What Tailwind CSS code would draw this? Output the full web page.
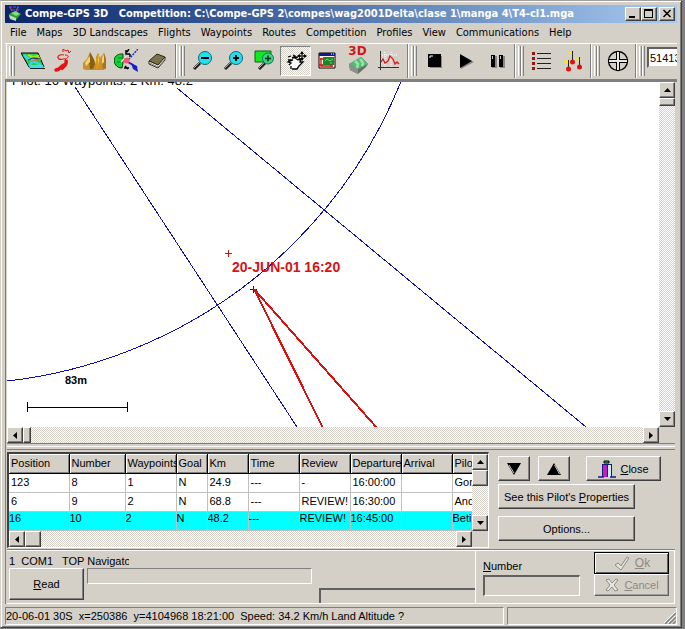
<!DOCTYPE html>
<html lang="en">
<head>
    <meta charset="UTF-8">
    <meta name="viewport" content="width=device-width, initial-scale=1.0">
    <title>Compe-GPS 3D</title>
    <script src="https://cdn.jsdelivr.net/npm/@tailwindcss/browser@4"></script>
</head>
<body class="bg-[#808080] text-black text-[11px] leading-[14px] font-['Liberation_Sans',sans-serif]">
<div class="h-screen pr-[3px] pb-px">
<div class="h-full flex flex-col bg-[#d4d0c8] border border-t-[#a0a0a0] border-l-[#d4d0c8] border-r-[#404040] border-b-[#404040] shadow-[inset_1px_1px_#fff,inset_-1px_-1px_#808080] p-1 pb-[2px] overflow-hidden">

    <!-- Title bar -->
    <header class="h-[18px] shrink-0 flex items-center bg-linear-to-r from-[#0a246a] to-[#a6caf0] pl-[2px] pr-[2px]">
        <svg class="w-4 h-4 shrink-0" viewBox="0 0 16 16">
            <path d="M2 1h10M5 4h8" stroke="#55f" stroke-dasharray="3 1"/>
            <path d="M3 1l2 4M11 1l-2 4" stroke="#e44" />
            <path d="M2 8l6-3 6 3-5 6-6-2z" fill="#2da02d"/>
            <path d="M4 7l5-2 4 3-4 2z" fill="#7be07b"/>
            <path d="M2 9l7 3v3l-6-2z" fill="#c8d8c8"/>
        </svg>
        <h1 class="flex-1 pl-[2px] text-white font-bold text-[11px] whitespace-pre font-['DejaVu_Sans_Condensed','DejaVu_Sans',sans-serif]">Compe-GPS 3D   Competition: C:\Compe-GPS 2\compes\wag2001Delta\clase 1\manga 4\T4-cl1.mga</h1>
        <div class="flex">
            <button aria-label="Minimize" class="w-4 h-[14px] bg-[#d4d0c8] border border-t-white border-l-white border-r-[#404040] border-b-[#404040] shadow-[inset_-1px_-1px_#808080]">
                <svg class="w-[14px] h-3" viewBox="0 0 14 12"><path d="M3 8h6v2H3z"/></svg>
            </button>
            <button aria-label="Maximize" class="w-4 h-[14px] bg-[#d4d0c8] border border-t-white border-l-white border-r-[#404040] border-b-[#404040] shadow-[inset_-1px_-1px_#808080]">
                <svg class="w-[14px] h-3" viewBox="0 0 14 12"><path d="M2 1h9v9H2zM3 3v6h7V3z" fill-rule="evenodd"/></svg>
            </button>
            <button aria-label="Close window" class="ml-[2px] w-4 h-[14px] bg-[#d4d0c8] border border-t-white border-l-white border-r-[#404040] border-b-[#404040] shadow-[inset_-1px_-1px_#808080]">
                <svg class="w-[14px] h-3" viewBox="0 0 14 12"><path d="M3.500 2l7 7M10.500 2l-7 7" stroke="#000" stroke-width="1.500"/></svg>
            </button>
        </div>
    </header>

    <!-- Menu -->
    <nav class="h-5 shrink-0 flex items-center gap-[10px] pl-[5px] whitespace-nowrap font-['DejaVu_Sans_Condensed','DejaVu_Sans',sans-serif]">
        <button>File</button>
        <button>Maps</button>
        <button>3D Landscapes</button>
        <button>Flights</button>
        <button>Waypoints</button>
        <button>Routes</button>
        <button>Competition</button>
        <button>Profiles</button>
        <button>View</button>
        <button>Communications</button>
        <button>Help</button>
    </nav>

    <!-- Toolbar -->
    <div class="h-[35px] shrink-0 flex pl-px overflow-hidden border-t border-white">
        <div class="shrink-0 flex items-center pl-[2px] pr-[3px] border-l border-l-white border-r border-r-[#808080]">
            <div class="w-[6px] h-[30px] mr-[2px] flex justify-between"><i class="w-[3px] border-l border-white border-r border-r-[#808080]"></i><i class="w-[3px] border-l border-white border-r border-r-[#808080]"></i></div>
            <button aria-label="Map" class="w-[31px] h-[30px] grid place-items-center">
                <svg class="w-6 h-6" viewBox="0 0 24 24">
                    <path d="M0 4h17l6 14H8z" fill="#30c850" stroke="#000"/>
                    <path d="M3 6l4 4 3-1 4 4M8 17l4-5 8 4" fill="none" stroke="#30d8f0" stroke-width="2.500"/>
                    <path d="M7 6l5 2 5-1 2 4" fill="none" stroke="#a0e820" stroke-width="2"/>
                    <path d="M7 11l5-2 7 1" fill="none" stroke="#202840"/>
                    <path d="M11 12l4-1 4 2" fill="none" stroke="#d07030"/>
                    <path d="M8 16h14l1 3H9z" fill="#40e0e0"/>
                    <path d="M9 19.500h15" stroke="#202020"/>
                </svg>
            </button>
            <button aria-label="Track" class="w-[31px] h-[30px] grid place-items-center">
                <svg class="w-6 h-6" viewBox="0 0 24 24" fill="none" stroke="#e81010">
                    <path d="M11 3V0l3 2 2-1 1 3 2-2" stroke-width="1"/>
                    <path d="M12 6c-5-1-8 2-5 4s8-3 6 2" stroke-width="1.200"/>
                    <path d="M13 6c5 0 3 3 1 4" stroke-width="1"/>
                    <path d="M14 11c1 4-1 6-5 9" stroke-width="3.500"/>
                    <path d="M12 16c-3 1-3 4-8 5" stroke-width="3.500" stroke-linecap="round"/>
                </svg>
            </button>
            <button aria-label="3D terrain" class="w-[31px] h-[30px] grid place-items-center">
                <svg class="w-6 h-6" viewBox="0 0 24 24">
                    <path d="M0 20v-6l4-4 3-7 4 7 2 5V8l2-4 2 5 4-5 2 6v10l-3 1H3z" fill="#c89030"/>
                    <path d="M7 3l4 8 1 4-2 5H7l-1-7z" fill="#846018"/>
                    <path d="M15 4l2 6-1 9-3 1V9z" fill="#d8981c"/>
                    <path d="M21 4l2 6v9l-3 1-1-8z" fill="#a87420"/>
                    <path d="M2 14l5-7v6l-4 4zM15 6l1 6-1 3zM19 9l2-4v8l-2 2z" fill="#f8d470"/>
                </svg>
            </button>
            <button aria-label="Waypoint globe" class="w-[31px] h-[30px] grid place-items-center">
                <svg class="w-6 h-6" viewBox="0 0 24 24">
                    <path d="M9 5C-3 4-2 19 8 19l1-5z" fill="#10d830" stroke="#004010"/>
                    <path d="M3 13h4M4 9h4" stroke="#088020"/>
                    <path d="M12 1v4h4M15 0l-2 3M16 5v3M10 19h5M11 17l3 3" stroke="#000" stroke-width="1.500" fill="none"/>
                    <path d="M24 0l-9 10" stroke="#2030c0" stroke-dasharray="2 1" stroke-width="1.500"/>
                    <path d="M17 14l6 3 1 6-5-3z" fill="#1020d0"/>
                    <path d="M14 13l5 3" stroke="#1020d0" stroke-width="2"/>
                    <path d="M7 13l5-5" stroke="#fff" stroke-width="1.500"/>
                    <circle cx="12.500" cy="11.500" r="3" fill="#f05878"/>
                </svg>
            </button>
            <button aria-label="Logbook" class="w-[31px] h-[30px] grid place-items-center">
                <svg class="w-6 h-6" viewBox="0 0 24 24">
                    <path d="M4 12l8-7 8 3-7 8z" fill="#7a7248" stroke="#2a2618"/>
                    <path d="M4 12l9 4 7-8v3l-7 8-9-4z" fill="#f4f4ec" stroke="#2a2618"/>
                    <path d="M5 14l8 4 7-8" fill="none" stroke="#888"/>
                </svg>
            </button>
        </div>

        <div class="shrink-0 flex items-center pl-[2px] pr-[3px] border-l border-l-white border-r border-r-[#808080]">
            <div class="w-[6px] h-[30px] mr-[2px] flex justify-between"><i class="w-[3px] border-l border-white border-r border-r-[#808080]"></i><i class="w-[3px] border-l border-white border-r border-r-[#808080]"></i></div>
            <button aria-label="Zoom out" class="w-[31px] h-[30px] grid place-items-center">
                <svg class="w-6 h-6" viewBox="0 0 24 24">
                    <path d="M9 14l-6 6" stroke="#202020" stroke-width="3"/><path d="M9 13l-6 6" stroke="#a0a0a0"/>
                    <circle cx="14" cy="9" r="6.500" fill="#20e0f0" stroke="#106878"/>
                    <path d="M10 9h8" stroke="#000" stroke-width="2"/>
                </svg>
            </button>
            <button aria-label="Zoom in" class="w-[31px] h-[30px] grid place-items-center">
                <svg class="w-6 h-6" viewBox="0 0 24 24">
                    <path d="M9 14l-6 6" stroke="#202020" stroke-width="3"/><path d="M9 13l-6 6" stroke="#a0a0a0"/>
                    <circle cx="14" cy="9" r="6.500" fill="#20e0f0" stroke="#106878"/>
                    <path d="M11 9h6M14 6v6" stroke="#000" stroke-width="2"/>
                </svg>
            </button>
            <button aria-label="Zoom window" class="w-[31px] h-[30px] grid place-items-center">
                <svg class="w-6 h-6" viewBox="0 0 24 24">
                    <path d="M2 2h16v11H2z" fill="#10e820" stroke="#106010"/>
                    <path d="M12 14l-6 6" stroke="#202020" stroke-width="3"/><path d="M12 13l-6 6" stroke="#a0a0a0"/>
                    <circle cx="15" cy="9.500" r="5.500" fill="#40d080" stroke="#107878"/>
                    <path d="M12 9.500h6M15 6.500v6" stroke="#003010" stroke-width="1.500"/>
                </svg>
            </button>
            <button aria-label="Pan" aria-pressed="true" class="w-[31px] h-[30px] grid place-items-center border border-t-[#808080] border-l-[#808080] border-white bg-[repeating-conic-gradient(#fff_0_25%,#d4d0c8_0_50%)] bg-[length:2px_2px]">
                <svg class="w-6 h-6" viewBox="0 0 24 24">
                    <path d="M6 19l-1-4 2-2-1-3 3-3 4 3 3-3 2 2-3 3h5l-3 3-3 4-4 1z" fill="#fff"/>
                    <path d="M4 8l3-1M9 6l2 1-3 2 6-1M4 11l5 0-5 2 3 1-2 2M7 17v3M11 9l3 2 2-2M15 11l2-1-1 3h3l-4 4-2 3H8" fill="none" stroke="#000" stroke-width="1.300"/>
                    <path d="M14 7h8M18 3v8" stroke="#000" stroke-width="1.300"/>
                    <path d="M16 5l2-3 2 3zM16 9l2 3 2-3zM16 5l-3 2 3 2zM20 5l3 2-3 2z"/>
                    <path d="M17.500 6.500h1v1h-1z" fill="#fff"/>
                </svg>
            </button>
            <button aria-label="Map window" class="w-[31px] h-[30px] grid place-items-center">
                <svg class="w-6 h-6" viewBox="0 0 24 24">
                    <path d="M4 4h16v15H4z" fill="#fff0e0" stroke="#000"/>
                    <path d="M4 4h16v3H4z" fill="#101890"/>
                    <path d="M8 8h11v8H8z" fill="#18882a"/><path d="M10 12l2-2 3 2 3-2M15 14h2" fill="none" stroke="#60e060"/>
                    <path d="M5 10h3M6 9v8h12M16 15v3M4 16h4" fill="none" stroke="#d01818" stroke-width="1.300"/>
                    <path d="M18 5h1M16 5h1" stroke="#fff"/>
                </svg>
            </button>
            <button aria-label="3D view" class="w-[31px] h-[30px] flex flex-col items-center justify-start pt-px">
                <span class="font-bold text-[12px] leading-[9px] text-[#d01818] font-['DejaVu_Sans',sans-serif]">3D</span>
                <svg class="w-6 h-[18px]" viewBox="0 0 24 18">
                    <path d="M3 8L15 1l7 7-2 3-8 7-8-4z" fill="#687068"/>
                    <path d="M3 8L15 1l7 7-10 5z" fill="#58b878"/>
                    <path d="M9 5l3 3-1 4M14 3l3 4-1 3" fill="none" stroke="#90e8a8" stroke-width="2.500"/>
                    <path d="M3 8l9 5v5l-8-4z" fill="#8c908c"/>
                </svg>
            </button>
            <button aria-label="Altitude graph" class="w-[31px] h-[30px] grid place-items-center">
                <svg class="w-6 h-6" viewBox="0 0 24 24" fill="none">
                    <path d="M3 6h18M8 3v16M14 3v16" stroke="#fff" stroke-dasharray="1 1"/>
                    <path d="M3.500 2v19M1 18.500h21" stroke="#303030"/>
                    <path d="M4 13l2-3 2 4 3-2 2-5 3 3 2 5 2-2 2 2" stroke="#d81818" stroke-width="1.300"/>
                </svg>
            </button>
        </div>

        <div class="shrink-0 flex items-center pl-[2px] pr-[2px] border-l border-l-white border-r border-r-[#808080]">
            <div class="w-[6px] h-[30px] mr-[2px] flex justify-between"><i class="w-[3px] border-l border-white border-r border-r-[#808080]"></i><i class="w-[3px] border-l border-white border-r border-r-[#808080]"></i></div>
            <button aria-label="Stop" class="w-[31px] h-[30px] grid place-items-center">
                <svg class="w-6 h-6" viewBox="0 0 24 24"><path d="M7 7h12v12H7z" fill="#888"/><path d="M5 5h13v13H5z"/><path d="M7 9V7h3" fill="none" stroke="#fff"/></svg>
            </button>
            <button aria-label="Play" class="w-[31px] h-[30px] grid place-items-center">
                <svg class="w-6 h-6" viewBox="0 0 24 24"><path d="M7 7l13 6-13 7z" fill="#888"/><path d="M6 5l12 7-12 7z"/></svg>
            </button>
            <button aria-label="Pause" class="w-[31px] h-[30px] grid place-items-center">
                <svg class="w-6 h-6" viewBox="0 0 24 24"><path d="M7 7h5v12H7zM15 7h5v12h-5z" fill="#888"/><path d="M6 6h4v12H6zM14 6h4v12h-4z"/><path d="M7.500 10V7M15.500 10V7" stroke="#ccc"/></svg>
            </button>
        </div>

        <div class="shrink-0 flex items-center pl-[2px] pr-[2px] border-l border-l-white border-r border-r-[#808080]">
            <div class="w-[6px] h-[30px] mr-[2px] flex justify-between"><i class="w-[3px] border-l border-white border-r border-r-[#808080]"></i><i class="w-[3px] border-l border-white border-r border-r-[#808080]"></i></div>
            <button aria-label="List" class="w-[31px] h-[30px] grid place-items-center">
                <svg class="w-6 h-6" viewBox="0 0 24 24">
                    <path d="M2 3h3v3H2zM2 8h3v3H2zM2 13h3v3H2zM2 18h3v3H2z" fill="#901818"/>
                    <path d="M7 4.500h14M7 9.500h14M7 14.500h14M7 19.500h14" stroke="#202020"/>
                </svg>
            </button>
            <button aria-label="Task flags" class="w-[31px] h-[30px] grid place-items-center">
                <svg class="w-6 h-6" viewBox="0 0 24 24">
                    <path d="M7.500 11v9M11.500 2v11M18.500 8v10" stroke="#202020"/>
                    <path d="M7 10l-5 3 5 2zM11 2L7 4l4 2zM18 8l-4 2 4 2z" fill="#f0f010" />
                    <circle cx="7.500" cy="20" r="2.500" fill="#e01010"/><circle cx="11.500" cy="13" r="2.500" fill="#e01010"/><circle cx="18.500" cy="18" r="2.500" fill="#e01010"/>
                </svg>
            </button>
        </div>

        <div class="shrink-0 flex items-center pl-[2px] pr-[2px] border-l border-l-white border-r border-r-[#808080]">
            <div class="w-[6px] h-[30px] mr-[2px] flex justify-between"><i class="w-[3px] border-l border-white border-r border-r-[#808080]"></i><i class="w-[3px] border-l border-white border-r border-r-[#808080]"></i></div>
            <button aria-label="Center" class="w-[31px] h-[30px] grid place-items-center">
                <svg class="w-6 h-6" viewBox="0 0 24 24" fill="none">
                    <circle cx="12" cy="12" r="9.500" stroke="#000" stroke-width="1.300"/>
                    <path d="M2 12h20M12 2v20" stroke="#000" stroke-width="4"/>
                    <path d="M3 12h18M12 3v18" stroke="#e8e6e0" stroke-width="2"/>
                </svg>
            </button>
        </div>

        <div class="flex-1 flex pl-[2px] border-l border-white overflow-hidden">
            <div class="w-[6px] h-[30px] mt-[2px] mr-[2px] shrink-0 flex justify-between"><i class="w-[3px] border-l border-white border-r border-r-[#808080]"></i><i class="w-[3px] border-l border-white border-r border-r-[#808080]"></i></div>
            <input aria-label="Scale" value="51413" class="shrink-0 w-20 h-[21px] mt-[3px] bg-white border-2 border-t-[#606060] border-l-[#606060] border-[#d4d0c8] pl-px text-[11px]">
        </div>
    </div>

    <div class="h-1 shrink-0 bg-[#808080] border-t border-t-[#d4d0c8]"></div>

    <main class="flex-1 min-h-0 flex flex-col pr-[2px] pl-px border-l border-l-[#808080]">
        <!-- Map -->
        <div class="flex-1 min-h-0 flex">
            <svg class="flex-1 min-w-0 h-full bg-white overflow-hidden" shape-rendering="crispEdges" fill="none">
                <text x="5" y="3" font-size="13" fill="#000">Pilot: 16 Waypoints: 2 Km: 48.2</text>
                <g stroke="#1010a0">
                    <circle cx="-54" cy="-181" r="483"/>
                    <path d="M68 5L290 345M170 6L579 345"/>
                    <path d="M243 207.500h7M246.500 204v7"/>
                </g>
                <path d="M247 207L316 346M247 207L370 346" stroke="#d41414" stroke-width="2"/>
                <path d="M218 171.500h7M221.500 168v7" stroke="#d41414"/>
                <text x="225" y="190" font-size="14" font-weight="bold" fill="#d41414">20-JUN-01 16:20</text>
                <text x="58" y="302" font-size="11" font-weight="bold" fill="#000">83m</text>
                <path d="M20 325.500h101M20.500 320v10M120.500 320v10" stroke="#000"/>
            </svg>
            <div class="w-4 shrink-0 flex flex-col bg-[repeating-conic-gradient(#fff_0_25%,#d4d0c8_0_50%)] bg-[length:2px_2px]">
                <button aria-label="Scroll up" class="h-4 grid place-items-center bg-[#d4d0c8] border border-t-white border-l-white border-r-[#404040] border-b-[#404040] shadow-[inset_-1px_-1px_#808080]"><svg class="w-[7px] h-1" viewBox="0 0 7 4"><path d="M0 4l3.500-4L7 4z"/></svg></button>
                <div class="h-2 bg-[#d4d0c8] border border-t-white border-l-white border-r-[#404040] border-b-[#404040] shadow-[inset_-1px_-1px_#808080]"></div>
                <button aria-label="Scroll down" class="h-4 mt-auto grid place-items-center bg-[#d4d0c8] border border-t-white border-l-white border-r-[#404040] border-b-[#404040] shadow-[inset_-1px_-1px_#808080]"><svg class="w-[7px] h-1" viewBox="0 0 7 4"><path d="M0 0l3.500 4L7 0z"/></svg></button>
            </div>
        </div>
        <div class="h-[17px] shrink-0 flex pr-4 border-b border-b-[#808080]">
            <div class="flex-1 flex bg-[repeating-conic-gradient(#fff_0_25%,#d4d0c8_0_50%)] bg-[length:2px_2px]">
                <button aria-label="Scroll left" class="w-4 grid place-items-center bg-[#d4d0c8] border border-t-white border-l-white border-r-[#404040] border-b-[#404040] shadow-[inset_-1px_-1px_#808080]"><svg class="w-1 h-[7px]" viewBox="0 0 4 7"><path d="M4 0L0 3.500 4 7z"/></svg></button>
                <div class="w-2 bg-[#d4d0c8] border border-t-white border-l-white border-r-[#404040] border-b-[#404040] shadow-[inset_-1px_-1px_#808080]"></div>
                <button aria-label="Scroll right" class="w-4 ml-auto grid place-items-center bg-[#d4d0c8] border border-t-white border-l-white border-r-[#404040] border-b-[#404040] shadow-[inset_-1px_-1px_#808080]"><svg class="w-1 h-[7px]" viewBox="0 0 4 7"><path d="M0 0l4 3.500L0 7z"/></svg></button>
            </div>
        </div>
        <div class="h-2 shrink-0 pt-[2px]"><div class="h-[4px] border-t border-t-white border-b border-b-[#808080]"></div></div>

        <!-- Results -->
        <section class="h-[98px] shrink-0 flex border-b border-b-[#808080]">
            <div class="flex-1 h-24 flex flex-col border-t-2 border-l-2 border-[#404040] border-r border-r-white border-b border-b-white overflow-hidden">
                <div class="flex-1 min-h-0 flex">
                    <div class="flex-1 min-w-0 overflow-hidden bg-white">
                        <table class="table-fixed w-[524px] border-collapse text-left leading-[13px]">
                            <colgroup>
                                <col class="w-[60px]"><col class="w-[56px]"><col class="w-[51px]"><col class="w-[31px]"><col class="w-[41px]"><col class="w-[51px]"><col class="w-[51px]"><col class="w-[51px]"><col class="w-[51px]"><col class="w-[81px]">
                            </colgroup>
                            <thead>
                                <tr class="h-[19px] bg-[#d4d0c8] whitespace-nowrap">
                                    <th class="p-0 pl-[2px] font-normal overflow-hidden border-r border-b border-black shadow-[inset_1px_1px_#fff,inset_-1px_-1px_#808080]">Position</th>
                                    <th class="p-0 pl-[2px] font-normal overflow-hidden border-r border-b border-black shadow-[inset_1px_1px_#fff,inset_-1px_-1px_#808080]">Number</th>
                                    <th class="p-0 pl-[2px] font-normal overflow-hidden border-r border-b border-black shadow-[inset_1px_1px_#fff,inset_-1px_-1px_#808080]">Waypoints</th>
                                    <th class="p-0 pl-[2px] font-normal overflow-hidden border-r border-b border-black shadow-[inset_1px_1px_#fff,inset_-1px_-1px_#808080]">Goal</th>
                                    <th class="p-0 pl-[2px] font-normal overflow-hidden border-r border-b border-black shadow-[inset_1px_1px_#fff,inset_-1px_-1px_#808080]">Km</th>
                                    <th class="p-0 pl-[2px] font-normal overflow-hidden border-r border-b border-black shadow-[inset_1px_1px_#fff,inset_-1px_-1px_#808080]">Time</th>
                                    <th class="p-0 pl-[2px] font-normal overflow-hidden border-r border-b border-black shadow-[inset_1px_1px_#fff,inset_-1px_-1px_#808080]">Review</th>
                                    <th class="p-0 pl-[2px] font-normal overflow-hidden border-r border-b border-black shadow-[inset_1px_1px_#fff,inset_-1px_-1px_#808080]">Departure</th>
                                    <th class="p-0 pl-[2px] font-normal overflow-hidden border-r border-b border-black shadow-[inset_1px_1px_#fff,inset_-1px_-1px_#808080]">Arrival</th>
                                    <th class="p-0 pl-[2px] font-normal overflow-hidden border-r border-b border-black shadow-[inset_1px_1px_#fff,inset_-1px_-1px_#808080]">Pilot</th>
                                </tr>
                            </thead>
                            <tbody class="[&_td]:p-0 [&_td]:border-r [&_td]:border-b [&_td]:border-[#c0c0c0] [&_td]:overflow-hidden [&_td]:whitespace-nowrap">
                                <tr class="h-[19px] [&>td]:pl-[2px]"><td>123</td><td>8</td><td>1</td><td>N</td><td>24.9</td><td>---</td><td>-</td><td>16:00:00</td><td></td><td>Gor</td></tr>
                                <tr class="h-[19px] [&>td]:pl-[2px]"><td>6</td><td>9</td><td>2</td><td>N</td><td>68.8</td><td>---</td><td>REVIEW!</td><td>16:30:00</td><td></td><td>And</td></tr>
                                <tr class="h-[19px] bg-[#00ffff] align-top"><td>16</td><td>10</td><td>2</td><td>N</td><td>48.2</td><td>---</td><td>REVIEW!</td><td>16:45:00</td><td></td><td>Beti</td></tr>
                            </tbody>
                        </table>
                    </div>
                    <div class="w-4 shrink-0 flex flex-col bg-[repeating-conic-gradient(#fff_0_25%,#d4d0c8_0_50%)] bg-[length:2px_2px]">
                        <button aria-label="Table up" class="h-4 grid place-items-center bg-[#d4d0c8] border border-t-white border-l-white border-r-[#404040] border-b-[#404040] shadow-[inset_-1px_-1px_#808080]"><svg class="w-[7px] h-1" viewBox="0 0 7 4"><path d="M0 4l3.500-4L7 4z"/></svg></button>
                        <div class="h-4 bg-[#d4d0c8] border border-t-white border-l-white border-r-[#404040] border-b-[#404040] shadow-[inset_-1px_-1px_#808080]"></div>
                        <button aria-label="Table down" class="h-4 mt-auto grid place-items-center bg-[#d4d0c8] border border-t-white border-l-white border-r-[#404040] border-b-[#404040] shadow-[inset_-1px_-1px_#808080]"><svg class="w-[7px] h-1" viewBox="0 0 7 4"><path d="M0 0l3.500 4L7 0z"/></svg></button>
                    </div>
                </div>
                <div class="h-4 shrink-0 flex pr-4">
                    <div class="flex-1 flex bg-[repeating-conic-gradient(#fff_0_25%,#d4d0c8_0_50%)] bg-[length:2px_2px]">
                        <button aria-label="Table left" class="w-4 grid place-items-center bg-[#d4d0c8] border border-t-white border-l-white border-r-[#404040] border-b-[#404040] shadow-[inset_-1px_-1px_#808080]"><svg class="w-1 h-[7px]" viewBox="0 0 4 7"><path d="M4 0L0 3.500 4 7z"/></svg></button>
                        <div class="w-4 bg-[#d4d0c8] border border-t-white border-l-white border-r-[#404040] border-b-[#404040] shadow-[inset_-1px_-1px_#808080]"></div>
                        <button aria-label="Table right" class="w-4 ml-auto grid place-items-center bg-[#d4d0c8] border border-t-white border-l-white border-r-[#404040] border-b-[#404040] shadow-[inset_-1px_-1px_#808080]"><svg class="w-1 h-[7px]" viewBox="0 0 4 7"><path d="M0 0l4 3.500L0 7z"/></svg></button>
                    </div>
                </div>
            </div>

            <div class="w-[186px] shrink-0 pl-[9px] pt-1">
                <div class="flex">
                    <button aria-label="Next pilot" class="w-8 h-[25px] grid place-items-center border border-t-white border-l-white border-r-[#404040] border-b-[#404040] shadow-[inset_-1px_-1px_#808080]"><svg class="w-4 h-3" viewBox="0 0 16 12"><path d="M1 0h14L8 12z"/><path d="M3 2l5 8" stroke="#ccc"/></svg></button>
                    <button aria-label="Previous pilot" class="w-8 h-[25px] ml-2 grid place-items-center border border-t-white border-l-white border-r-[#404040] border-b-[#404040] shadow-[inset_-1px_-1px_#808080]"><svg class="w-4 h-3" viewBox="0 0 16 12"><path d="M1 12h14L8 0z"/><path d="M8.500 2l5 9" stroke="#ccc"/></svg></button>
                    <button class="w-[75px] h-[25px] ml-4 flex items-center justify-center gap-1 border border-t-white border-l-white border-r-[#404040] border-b-[#404040] shadow-[inset_-1px_-1px_#808080]">
                        <svg class="w-[18px] h-[18px]" viewBox="0 0 18 18">
                            <path d="M6 1h5v2H6z" fill="#20c040" stroke="#000"/>
                            <path d="M4 4h10v13H4z" fill="#181880"/>
                            <path d="M5 5h4v12H5z" fill="#c020c0"/><path d="M10 5h3v12h-3z" fill="#c8f0ff"/>
                            <path d="M0 17h6M12 17h6" stroke="#181880" stroke-width="1.500"/>
                        </svg>
                        <span><u>C</u>lose</span>
                    </button>
                </div>
                <button class="block w-[137px] h-[25px] mt-[3px] border border-t-white border-l-white border-r-[#404040] border-b-[#404040] shadow-[inset_-1px_-1px_#808080] whitespace-nowrap">See this Pilot's <u>P</u>roperties</button>
                <button class="block w-[137px] h-[25px] mt-[7px] border border-t-white border-l-white border-r-[#404040] border-b-[#404040] shadow-[inset_-1px_-1px_#808080]">Options...</button>
            </div>
        </section>

        <!-- Download panel -->
        <section class="h-[54px] shrink-0 flex border-t border-b border-white">
            <div class="flex-1 min-w-0 pl-[2px] flex flex-col">
                <div class="w-[120px] mt-[3px] overflow-hidden whitespace-pre h-[14px]">1  COM1   TOP Navigator</div>
                <div class="flex-1 flex">
                    <button class="w-[75px] h-8 shrink-0 border border-t-white border-l-white border-r-[#404040] border-b-[#404040] shadow-[inset_-1px_-1px_#808080]"><u>R</u>ead</button>
                    <div class="w-[225px] h-4 ml-[3px] shrink-0 border border-t-[#808080] border-l-[#808080] border-white"></div>
                    <div class="flex-1 mt-5 ml-[7px] border-t-2 border-l-2 border-[#606060]"></div>
                </div>
            </div>
            <div class="w-[200px] shrink-0 flex border-l border-r border-white pl-[7px] pr-[5px] pt-px">
                <div class="flex-1 pt-[7px]">
                    <label for="pilotNumber" class="block"><u>N</u>umber</label>
                    <input id="pilotNumber" class="block w-[97px] h-[21px] mt-[2px] border-t-2 border-l-2 border-[#606060] border-r border-b border-r-white border-b-white pl-1">
                </div>
                <div class="w-[75px] text-[#8c8a84] [text-shadow:1px_1px_#fff]">
                    <button disabled class="w-full h-[22px] flex items-center justify-center gap-1 border border-black shadow-[inset_1px_1px_#fff,inset_-1px_-1px_#606060]">
                        <svg class="w-[18px] h-4" viewBox="0 0 18 16"><path d="M2 10l3-2 3 3 6-9 2 1-8 12z" fill="#e8e6e0" stroke="#8c8a84"/></svg>
                        <span class="text-[12px]"><u>O</u>k</span>
                    </button>
                    <button disabled class="w-full h-[22px] flex items-center justify-center gap-1 border border-t-white border-l-white border-r-[#606060] border-b-[#606060] shadow-[inset_-1px_-1px_#a0a0a0]">
                        <svg class="w-4 h-4" viewBox="0 0 16 16"><path d="M2 3l3-1 3 4 4-4 2 1-4 5 4 5-3 1-3-4-4 4-2-1 4-5z" fill="#e8e6e0" stroke="#8c8a84"/></svg>
                        <span class="text-[11px]"><u>C</u>ancel</span>
                    </button>
                </div>
            </div>
        </section>
    </main>

    <!-- Status bar -->
    <footer class="h-[18px] mt-[3px] shrink-0 flex gap-[3px]">
        <div class="flex-1 whitespace-pre pt-px border border-t-[#808080] border-l-[#808080] border-white">20-06-01 30S  x=250386  y=4104968 18:21:00  Speed: 34.2 Km/h Land Altitude ?</div>
        <div class="w-[170px] flex justify-end items-end border border-t-[#808080] border-l-[#808080] border-white">
            <svg class="w-3 h-3" viewBox="0 0 12 12"><path d="M1 12L12 1M5 12l7-7M9 12l3-3" stroke="#808080" stroke-width="1.500"/><path d="M0 11L11 0M4 11l7-7" stroke="#fff"/></svg>
        </div>
    </footer>
</div>
</div>
</body>
</html>
